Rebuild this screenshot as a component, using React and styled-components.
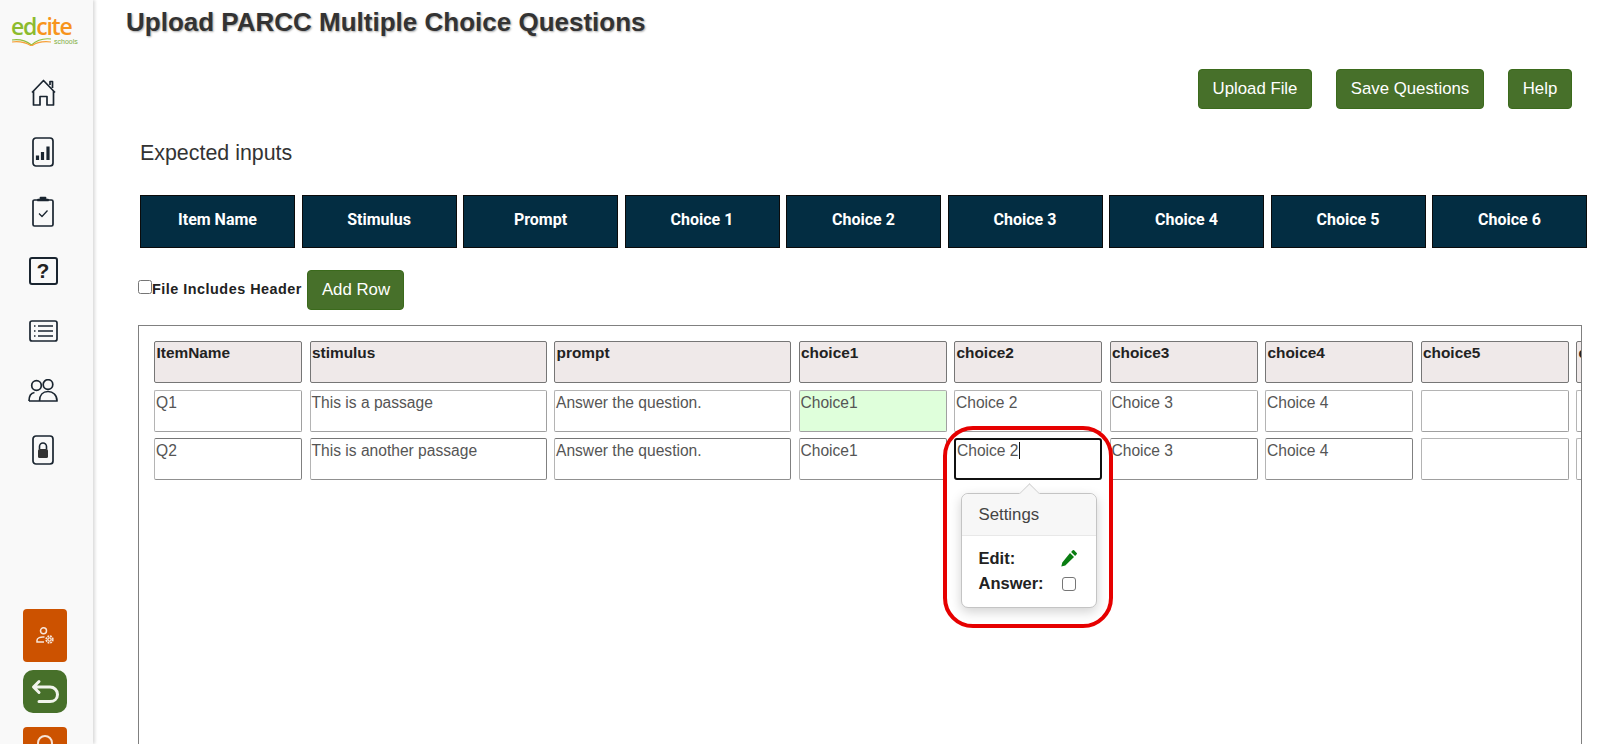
import React from "react";
import styled, { createGlobalStyle } from "styled-components";

const colors = {
  green: "#47702a",
  greenBorder: "#3b6a1c",
  navy: "#032d42",
  orange: "#cc5200",
  head: "#efe9e9",
  line: "#767676",
  text: "#555555",
  ink: "#1a2530",
};

const headings = ["Item Name", "Stimulus", "Prompt", "Choice 1", "Choice 2", "Choice 3", "Choice 4", "Choice 5", "Choice 6"];
const columns = ["ItemName", "stimulus", "prompt", "choice1", "choice2", "choice3", "choice4", "choice5", "c"];
const rows = [
  ["Q1", "This is a passage", "Answer the question.", "Choice1", "Choice 2", "Choice 3", "Choice 4", "", ""],
  ["Q2", "This is another passage", "Answer the question.", "Choice1", "Choice 2", "Choice 3", "Choice 4", "", ""],
];

const HomeIcon = () => (
  <NavSvg width="25" height="27" viewBox="0 0 25 27">
    <path d="M1 13.500 12.500 1.500 24 13.500M2.500 12V26h6.500v-8.500h7V26h6.500V12M19 6V2.500h2.500V9" />
  </NavSvg>
);

const ReportIcon = () => (
  <NavSvg width="22" height="30" viewBox="0 0 22 30">
    <rect x="1" y="1" width="20" height="28" rx="3" />
    <path d="M5.500 18.500v4.500M10.500 15v8M16 9.500V23" strokeWidth="3.200" />
  </NavSvg>
);

const ClipboardIcon = () => (
  <NavSvg width="22" height="31" viewBox="0 0 22 31">
    <path d="M6 4H2.500A1.500 1.500 0 0 0 1 5.500V28.500A1.500 1.500 0 0 0 2.500 30h17a1.500 1.500 0 0 0 1.500-1.500V5.500A1.500 1.500 0 0 0 19.500 4H16" />
    <path d="M6 4.500V3.500h2.500V1.500h5v2H16v1z" fill={colors.ink} />
    <path d="M7 17.500l3 3 5.500-6" strokeWidth="1.300" />
  </NavSvg>
);

const ListIcon = () => (
  <NavSvg width="29" height="22" viewBox="0 0 29 22">
    <rect x="1" y="1" width="27" height="20" rx="2" />
    <path d="M9 6h15M9 11h15M9 16h15M5 6h1.500M5 11h1.500M5 16h1.500" strokeWidth="1.500" />
  </NavSvg>
);

const UsersIcon = () => (
  <NavSvg width="30" height="23" viewBox="0 0 30 23">
    <circle cx="8.500" cy="6.500" r="4.800" />
    <circle cx="20" cy="5.500" r="4.800" />
    <path d="M1 22c0-5 2.500-8 5.500-8.500M11.500 22H1M11.500 22c0-6 3.500-9.500 8.500-9.500s9 3.500 9 9.500z" />
  </NavSvg>
);

const LockIcon = () => (
  <NavSvg width="22" height="30" viewBox="0 0 22 30">
    <rect x="1" y="1" width="20" height="28" rx="3" />
    <path d="M7.500 14v-2.500a3.500 3.500 0 0 1 7 0V14" strokeWidth="1.600" />
    <rect x="6" y="14" width="10" height="9" rx="1.500" fill="#333" stroke="none" />
  </NavSvg>
);

const App = () => {
  return (
    <>
      <GlobalStyle />
      <StyledRoot>
        <Sidebar>
          <Logo>
            <LogoWord>
              <span>ed</span>
              <span>cite</span>
            </LogoWord>
            <LogoFoot>
              <svg width="41" height="8" viewBox="0 0 41 8">
                <path d="M1 2c7-1 13 0 19.500 5C26 2 32 0 40 1" fill="none" stroke="#8fbf3f" strokeWidth="1.200" />
                <path d="M1 4c7-1 13 0 19.500 4C26 4 32 3 40 4" fill="none" stroke="#f7a13a" strokeWidth="1.200" />
              </svg>
              <span>schools</span>
            </LogoFoot>
          </Logo>
          <NavList>
            <NavItem><HomeIcon /></NavItem>
            <NavItem><ReportIcon /></NavItem>
            <NavItem><ClipboardIcon /></NavItem>
            <NavItem><IconBox>?</IconBox></NavItem>
            <NavItem><ListIcon /></NavItem>
            <NavItem><UsersIcon /></NavItem>
            <NavItem><LockIcon /></NavItem>
          </NavList>
          <SideButtons>
            <SideButton $color={colors.orange} $h={53} $radius={4}>
              <svg width="18" height="17" viewBox="0 0 18 17" fill="none" stroke="#f8e6da" strokeWidth="1.500">
                <circle cx="7.500" cy="3.800" r="3" />
                <path d="M8.500 10c-4 -.5-7.500 1-7.500 3.200V15h7" />
                <circle cx="13.500" cy="12.500" r="2.300" fill="#f8e6da" stroke="none" />
                <circle cx="13.500" cy="12.500" r="3.400" strokeWidth="1.600" strokeDasharray="1.800 .9" />
                <circle cx="13.500" cy="12.500" r="1" fill={colors.orange} stroke="none" />
              </svg>
            </SideButton>
            <SideButton $color={colors.green} $h={43} $radius={10}>
              <svg width="29" height="25" viewBox="0 0 29 25" fill="none" stroke="#f1f4ec" strokeWidth="3" strokeLinecap="round" strokeLinejoin="round">
                <path d="M8 2.500 2.500 8 8 13.500M3 8h16c4 0 7.500 3 7.500 7.500S23 22.500 19 22.500H8" />
              </svg>
            </SideButton>
            <SideButton $color={colors.orange} $h={53} $radius={4} $top>
              <svg width="22" height="22" viewBox="0 0 22 22" fill="none" stroke="#f6e3d6" strokeWidth="2">
                <circle cx="11" cy="10" r="7" />
                <path d="m16 15 5 5" />
              </svg>
            </SideButton>
          </SideButtons>
        </Sidebar>
        <Main>
          <Title>Upload PARCC Multiple Choice Questions</Title>
          <Toolbar>
            <GreenButton $w={114}>Upload File</GreenButton>
            <GreenButton $w={148}>Save Questions</GreenButton>
            <GreenButton $w={64}>Help</GreenButton>
          </Toolbar>
          <SubTitle>Expected inputs</SubTitle>
          <HeadingStrip>
            {headings.map((heading) => (
              <HeadingCell key={heading}>{heading}</HeadingCell>
            ))}
          </HeadingStrip>
          <OptionRow>
            <HeaderCheck type="checkbox" />
            <OptionLabel>File Includes Header</OptionLabel>
            <GreenButton $w={97}>Add Row</GreenButton>
          </OptionRow>
          <Sheet>
            <SheetGrid>
              {columns.map((column) => (
                <ColumnCell key={column}>{column}</ColumnCell>
              ))}
              {rows[0].map((value, i) => (
                <InputCell key={i} $correct={i === 3} $soft>{value}</InputCell>
              ))}
              {rows[1].map((value, i) =>
                i === 4 ? (
                  <ActiveWrap key={i}>
                    <ActiveCell>
                      {value}
                      <Caret />
                    </ActiveCell>
                    <Highlight />
                    <Popover>
                      <PopoverHeader>Settings</PopoverHeader>
                      <PopoverBody>
                        <PopoverRow>
                          <strong>Edit:</strong>
                          <svg width="18" height="18" viewBox="0 0 18 18" fill="#0a7d12">
                            <path d="M12.700 1.300a1 1 0 0 1 1.400 0l2.600 2.600a1 1 0 0 1 0 1.400l-1.600 1.600-4-4zM10 3.900l4 4-8.700 8.700-4 1 1-4z" />
                          </svg>
                        </PopoverRow>
                        <PopoverRow>
                          <strong>Answer:</strong>
                          <AnswerBox />
                        </PopoverRow>
                      </PopoverBody>
                    </Popover>
                  </ActiveWrap>
                ) : (
                  <InputCell key={i} $soft={i > 6}>{value}</InputCell>
                )
              )}
            </SheetGrid>
          </Sheet>
        </Main>
      </StyledRoot>
    </>
  );
};

export default App;

const GlobalStyle = createGlobalStyle`
  html, body {
    margin: 0;
    height: 100%;
    overflow: hidden;
    background: #ffffff;
    font-family: "Liberation Sans", Arial, sans-serif;
  }
`;

const StyledRoot = styled.div`
  display: flex;
  width: 1600px;
  height: 744px;
  overflow: hidden;
`;

const Sidebar = styled.aside`
  display: flex;
  flex-direction: column;
  flex: 0 0 93px;
  height: 744px;
  overflow: hidden;
  background: #f9f9f9;
  box-shadow: 2px 0 3px rgba(0, 0, 0, 0.14);
  position: relative;
  z-index: 1;
  & > * {
    flex-shrink: 0;
  }
`;

const Logo = styled.div`
  display: flex;
  flex-direction: column;
  padding: 14px 0 0 11px;
  height: 63px;
  box-sizing: border-box;
`;

const LogoWord = styled.div`
  display: flex;
  font-family: "Open Sans", sans-serif;
  font-size: 23px;
  font-weight: 600;
  line-height: 24px;
  letter-spacing: -1.2px;
  color: #f7941d;
  & > span:first-child {
    color: #8cbb2e;
  }
`;

const LogoFoot = styled.div`
  display: flex;
  align-items: flex-end;
  gap: 2px;
  font-size: 7px;
  line-height: 8px;
  color: #7fae3c;
`;

const NavList = styled.nav`
  display: flex;
  flex-direction: column;
  padding-right: 7px;
`;

const NavItem = styled.div`
  display: flex;
  align-items: center;
  justify-content: center;
  height: 59.500px;
`;

const NavSvg = styled.svg`
  fill: none;
  stroke: ${colors.ink};
  stroke-width: 1.700;
  stroke-linejoin: round;
`;

const IconBox = styled.div`
  display: flex;
  align-items: center;
  justify-content: center;
  box-sizing: border-box;
  width: 29px;
  height: 28px;
  border: 2px solid ${colors.ink};
  border-radius: 3px;
  font-size: 21px;
  font-weight: 700;
  color: #222;
`;

const SideButtons = styled.div`
  display: flex;
  flex-direction: column;
  align-items: flex-start;
  gap: 8px;
  margin-top: 129.500px;
  padding-left: 23px;
`;

const SideButton = styled.div`
  display: flex;
  align-items: ${(p) => (p.$top ? "flex-start" : "center")};
  justify-content: center;
  flex: 0 0 auto;
  width: 44px;
  height: ${(p) => p.$h}px;
  margin-top: ${(p) => (p.$top ? "6px" : "0")};
  padding-top: ${(p) => (p.$top ? "6px" : "0")};
  box-sizing: border-box;
  background: ${(p) => p.$color};
  border-radius: ${(p) => p.$radius}px;
`;

const Main = styled.main`
  display: flex;
  flex-direction: column;
  flex: 1;
  min-width: 0;
  padding-left: 32px;
  & > * {
    flex-shrink: 0;
  }
`;

const Title = styled.h1`
  margin: 0;
  padding: 7px 0 0 1px;
  height: 69px;
  box-sizing: border-box;
  font-size: 26px;
  line-height: 30px;
  font-weight: 700;
  color: #333333;
  text-shadow: 1px 1px 2px rgba(0, 0, 0, 0.35);
`;

const Toolbar = styled.div`
  display: flex;
  justify-content: flex-end;
  gap: 24px;
  padding-right: 28px;
`;

const GreenButton = styled.button`
  flex: 0 0 auto;
  width: ${(p) => p.$w}px;
  height: 40px;
  padding: 0;
  background: ${colors.green};
  border: 1px solid ${colors.greenBorder};
  border-radius: 4px;
  color: #ffffff;
  font-family: "Liberation Sans", Arial, sans-serif;
  font-size: 16.800px;
`;

const SubTitle = styled.h2`
  margin: 29px 0 0 15px;
  height: 57px;
  font-size: 21.400px;
  line-height: 30px;
  font-weight: 400;
  color: #333333;
`;

const HeadingStrip = styled.div`
  display: flex;
  gap: 6.500px;
  margin-left: 15px;
`;

const HeadingCell = styled.div`
  display: flex;
  align-items: center;
  justify-content: center;
  flex: 0 0 155px;
  height: 53px;
  padding-bottom: 4px;
  box-sizing: border-box;
  background: ${colors.navy};
  border: 1px solid #0b0b0b;
  color: #ffffff;
  font-family: Roboto, sans-serif;
  font-weight: 700;
  font-size: 16px;
`;

const OptionRow = styled.div`
  display: flex;
  align-items: center;
  margin: 22px 0 15px 13px;
  height: 40px;
`;

const HeaderCheck = styled.input`
  width: 14px;
  height: 14px;
  margin: 0 0 7px 0;
`;

const OptionLabel = styled.label`
  margin: 0 5.500px 2px 0;
  font-size: 14.400px;
  font-weight: 700;
  letter-spacing: 0.5px;
  color: #222222;
`;

const Sheet = styled.section`
  width: 1444px;
  height: 500px;
  margin-left: 13px;
  padding: 15px 0 0 15px;
  box-sizing: border-box;
  border: 1px solid #808080;
  overflow: hidden;
`;

const SheetGrid = styled.div`
  display: grid;
  grid-template-columns: 148px 237px 237px repeat(6, 148px);
  grid-auto-rows: 42px;
  column-gap: 7.500px;
  row-gap: 6.500px;
`;

const ColumnCell = styled.div`
  box-sizing: border-box;
  padding: 2px 1.500px;
  background: ${colors.head};
  border: 1px solid ${colors.line};
  border-radius: 2px;
  font-size: 15.400px;
  line-height: 18px;
  font-weight: 700;
  color: #222222;
  overflow: hidden;
`;

const InputCell = styled.div`
  box-sizing: border-box;
  padding: 3px 1px;
  background: ${(p) => (p.$correct ? "#dfffdb" : "#ffffff")};
  border: 1px solid;
  border-color: ${(p) => (p.$soft ? "#b4b4b4 #a0a0a0 #a0a0a0 #b4b4b4" : "#767676 #808080 #909090 #b4b4b4")};
  border-radius: 2px;
  font-size: 15.600px;
  line-height: 18px;
  color: ${colors.text};
  overflow: hidden;
`;

const ActiveWrap = styled.div`
  position: relative;
`;

const ActiveCell = styled.div`
  box-sizing: border-box;
  height: 42px;
  padding: 2px 1px;
  border: 2px solid #111111;
  border-radius: 3px;
  font-size: 15.600px;
  line-height: 18px;
  color: ${colors.text};
`;

const Caret = styled.span`
  display: inline-block;
  width: 1px;
  height: 17px;
  vertical-align: -3px;
  background: #111111;
`;

const Highlight = styled.div`
  position: absolute;
  top: -12px;
  left: -11px;
  width: 170px;
  height: 202px;
  box-sizing: border-box;
  border: 4px solid #e60000;
  border-radius: 30px;
  pointer-events: none;
`;

const Popover = styled.div`
  position: absolute;
  top: 55px;
  left: 6.500px;
  width: 136px;
  height: 115px;
  box-sizing: border-box;
  background: #ffffff;
  border: 1px solid #c4c4c4;
  border-radius: 7px;
  box-shadow: 0 4px 12px rgba(0, 0, 0, 0.18);
  z-index: 2;
  &::before {
    content: "";
    position: absolute;
    top: -9px;
    left: 59px;
    width: 16px;
    height: 16px;
    background: #f7f7f7;
    border-top: 1px solid #d4d4d4;
    border-left: 1px solid #d4d4d4;
    transform: rotate(45deg) scale(0.85);
  }
`;

const PopoverHeader = styled.div`
  position: relative;
  height: 42px;
  padding-left: 17px;
  box-sizing: border-box;
  background: #f7f7f7;
  border-bottom: 1px solid #e8e8e8;
  border-radius: 7px 7px 0 0;
  font-size: 16.800px;
  line-height: 41px;
  color: #444444;
`;

const PopoverBody = styled.div`
  display: flex;
  flex-direction: column;
  gap: 7.500px;
  padding: 13px 18px 0 17px;
`;

const PopoverRow = styled.div`
  display: flex;
  align-items: center;
  justify-content: space-between;
  height: 18px;
  font-size: 16.500px;
  color: #222222;
  & > span {
    margin-right: 2px;
  }
`;

const AnswerBox = styled.span`
  width: 14px;
  height: 14px;
  box-sizing: border-box;
  border: 1px solid #767676;
  border-radius: 3px;
  background: #ffffff;
`;
